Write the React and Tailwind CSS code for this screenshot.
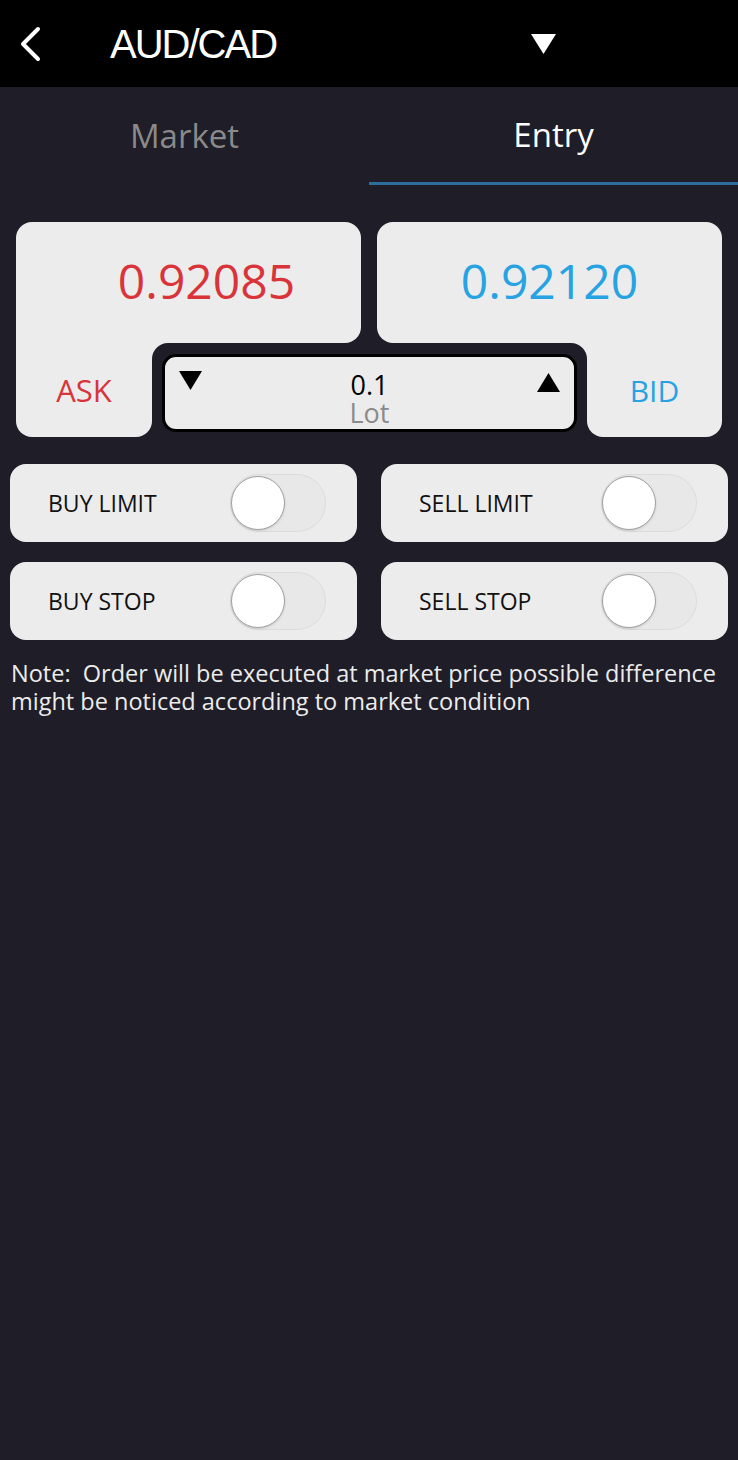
// Entry order screen - AUD/CAD

const Toggle = () => (
  <div className="w-[96px] h-[58px] rounded-full bg-[#e8e8e8] border border-[#dcdcdc] flex items-center">
    <div className="w-[54px] h-[54px] rounded-full bg-white border border-[#a0a0a0] shadow-sm" />
  </div>
);

const OrderRow = ({ label }) => (
  <div className="h-[78px] rounded-[16px] bg-[#ececec] flex items-center">
    <span className="pl-[38px] w-[220px] text-[23px] text-[#111]">{label}</span>
    <Toggle />
  </div>
);

const App = () => {
  const orders = ['BUY LIMIT', 'SELL LIMIT', 'BUY STOP', 'SELL STOP'];

  return (
    <div className="min-h-[1460px] bg-[#1f1d27] font-['Open_Sans',sans-serif]">
      {/* Header */}
      <div className="h-[87px] bg-black flex items-center">
        <svg className="ml-[17px]" width="26" height="36" viewBox="0 0 26 36">
          <path d="M21 3 L6 18 L21 33" fill="none" stroke="white" strokeWidth="4" strokeLinecap="round" strokeLinejoin="round" />
        </svg>
        <span className="ml-[67px] text-white text-[40px] tracking-[-2px] font-['Liberation_Sans',sans-serif]">AUD/CAD</span>
        <svg className="ml-auto mr-[182px]" width="25" height="20" viewBox="0 0 25 20">
          <path d="M0 0 H25 L12.5 20 Z" fill="white" />
        </svg>
      </div>

      {/* Tabs */}
      <div className="h-[98px] flex">
        <div className="flex-1 flex items-center justify-center text-[33px] text-[#8a8a8a]">Market</div>
        <div className="flex-1 flex items-center justify-center text-[33px] text-white border-b-[3px] border-[#2e6e9c]">Entry</div>
      </div>

      {/* Prices */}
      <div className="px-4 mt-[37px]">
        <div className="flex gap-4">
          <div className="w-[345px] h-[121px] bg-[#ececec] rounded-t-[16px] rounded-br-[16px] flex items-center justify-center pl-9 pb-1">
            <span className="text-[48px] text-[#d9343a]">0.92085</span>
          </div>
          <div className="w-[345px] h-[121px] bg-[#ececec] rounded-t-[16px] rounded-bl-[16px] flex items-center justify-center pb-1">
            <span className="text-[48px] text-[#27a2e3]">0.92120</span>
          </div>
        </div>
        <div className="flex h-[94px]">
          <div className="w-[136px] bg-[#ececec] rounded-b-[16px] flex items-center justify-center">
            <span className="text-[31px] text-[#d9343a]">ASK</span>
          </div>
          <div className="w-[435px] bg-[linear-gradient(#ececec_16px,transparent_16px)]">
            <div className="h-full bg-[#1f1d27] rounded-t-[16px] pt-[11px] px-[10px] pb-[5px]">
              <div className="h-full rounded-[14px] border-[3px] border-black bg-[#ececec] flex items-start px-[14px] pt-[14px]">
                <svg width="23" height="19" viewBox="0 0 23 19">
                  <path d="M0 0 H23 L11.5 19 Z" fill="black" />
                </svg>
                <div className="flex-1 flex flex-col items-center leading-[28px]">
                  <span className="text-[27px] text-black">0.1</span>
                  <span className="text-[27px] text-[#8a8a8a]">Lot</span>
                </div>
                <svg className="mt-[2px]" width="23" height="19" viewBox="0 0 23 19">
                  <path d="M0 19 H23 L11.5 0 Z" fill="black" />
                </svg>
              </div>
            </div>
          </div>
          <div className="w-[135px] bg-[#ececec] rounded-b-[16px] flex items-center justify-center">
            <span className="text-[30px] text-[#27a2e3]">BID</span>
          </div>
        </div>
      </div>

      {/* Order types */}
      <div className="px-[10px] mt-[27px] grid grid-cols-2 gap-x-[24px] gap-y-[20px]">
        {orders.map(label => (
          <OrderRow key={label} label={label} />
        ))}
      </div>

      {/* Note */}
      <p className="px-[11px] mt-[19px] text-[23.5px] leading-[28px] text-[#ececec] whitespace-nowrap">
        Note:&nbsp; Order will be executed at market price possible difference
        <br />
        might be noticed according to market condition
      </p>
    </div>
  );
};

export default App;
